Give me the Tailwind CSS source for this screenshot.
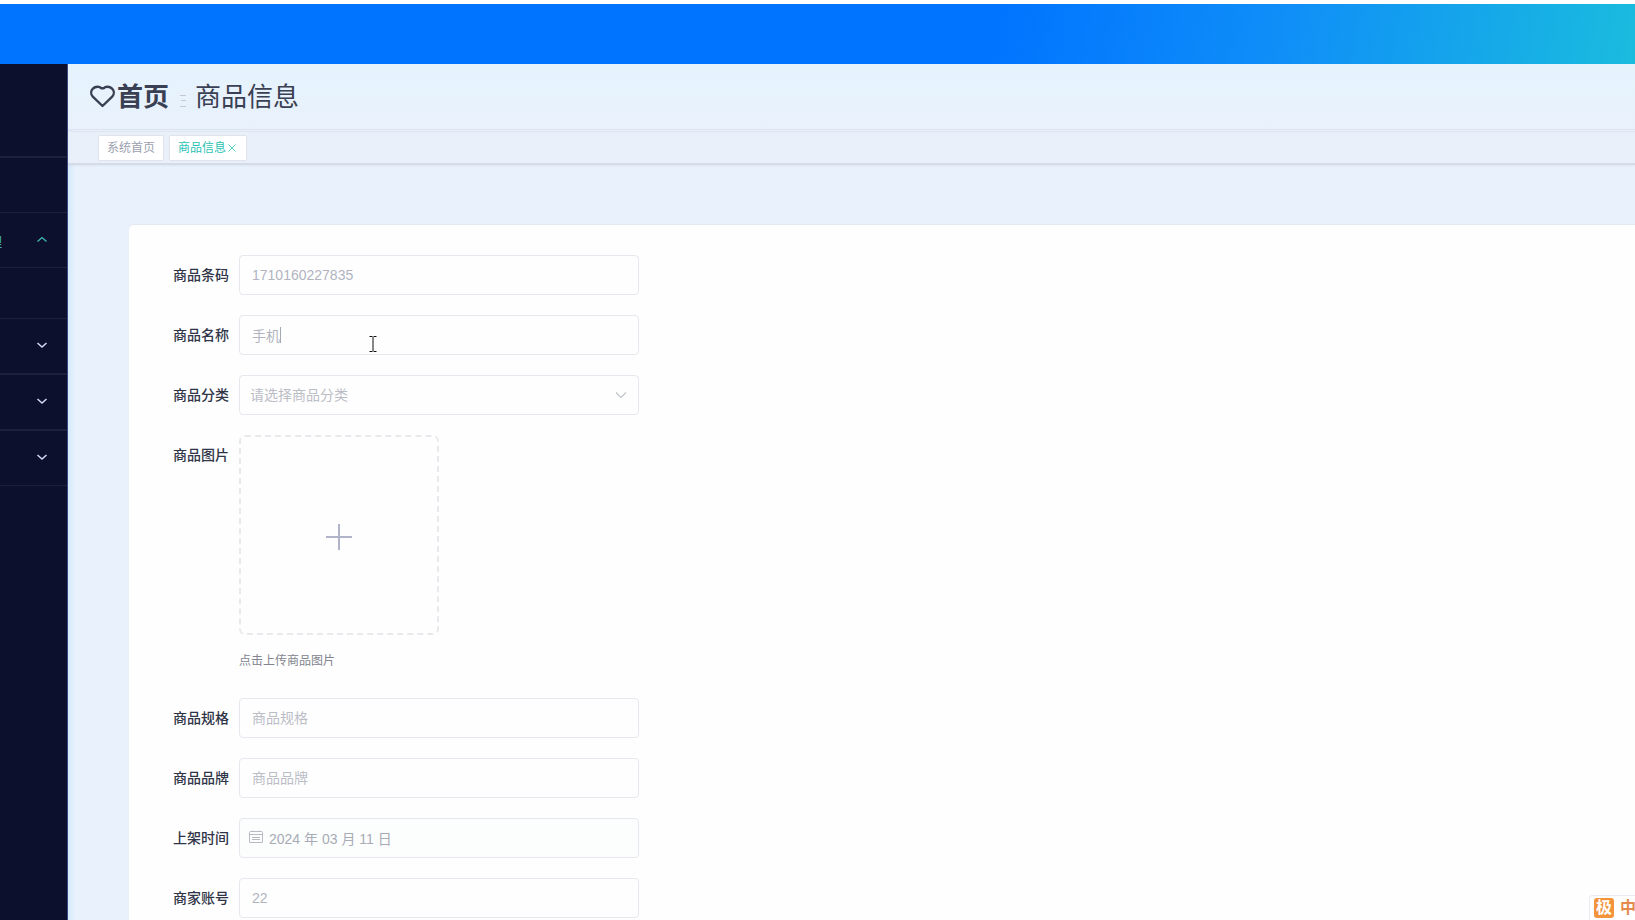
<!DOCTYPE html>
<html lang="zh-CN">
<head>
<meta charset="utf-8">
<meta name="viewport" content="width=device-width, initial-scale=1">
<title>商品信息</title>
<script src="https://cdn.jsdelivr.net/npm/@tailwindcss/browser@4"></script>
</head>
<body class="flex h-screen flex-col overflow-hidden bg-white pt-1 font-['Liberation_Sans','Noto_Sans_CJK_SC',sans-serif] text-sm text-[#303548]">
  <header class="h-[60px] shrink-0 bg-linear-[100deg,#0073ff_0%,#0073ff_60%,#0f8ef8_78%,#1abcde_100%]"></header>

  <div class="flex min-h-0 flex-1">
    <!-- Side navigation, scrolled so that only the submenu arrows show -->
    <nav aria-label="菜单" class="w-[68px] shrink-0 overflow-hidden border-r border-[#3a4a80] bg-[#0c102c]">
      <ul>
        <li class="h-[94px] border-b-2 border-[#1d203c]"></li>
        <li class="h-[55px] border-b border-[#1d203c]"></li>
        <li class="h-[55px] border-b border-[#1d203c]">
          <button type="button" aria-label="管理" class="relative flex h-full w-full items-center justify-end pr-[19px] text-[#3fb9b5]">
            <span class="absolute right-[65px] pt-1 whitespace-nowrap">管理</span>
            <svg class="h-3 w-3" viewBox="0 0 12 12" fill="none" stroke="currentColor" stroke-width="1.300"><path d="M1.500 7.500 6 3.500l4.500 4"/></svg>
          </button>
        </li>
        <li class="h-[51px] border-b border-[#1d203c]"></li>
        <li class="h-14 border-b-2 border-[#1d203c]">
          <button type="button" aria-label="展开" class="flex h-full w-full items-center justify-end pr-[19px] pb-[2px] text-[#d5daf2]"><svg class="h-3 w-3" viewBox="0 0 12 12" fill="none" stroke="currentColor" stroke-width="1.500"><path d="M1.500 4 6 8l4.500-4"/></svg></button>
        </li>
        <li class="h-14 border-b-2 border-[#1d203c]">
          <button type="button" aria-label="展开" class="flex h-full w-full items-center justify-end pr-[19px] pb-[2px] text-[#d5daf2]"><svg class="h-3 w-3" viewBox="0 0 12 12" fill="none" stroke="currentColor" stroke-width="1.500"><path d="M1.500 4 6 8l4.500-4"/></svg></button>
        </li>
        <li class="h-[55px] border-b border-[#1d203c]">
          <button type="button" aria-label="展开" class="flex h-full w-full items-center justify-end pr-[19px] pb-[2px] text-[#d5daf2]"><svg class="h-3 w-3" viewBox="0 0 12 12" fill="none" stroke="currentColor" stroke-width="1.500"><path d="M1.500 4 6 8l4.500-4"/></svg></button>
        </li>
      </ul>
    </nav>

    <main class="min-w-0 flex-1 overflow-auto bg-[#e9f1fc] bg-linear-[90deg,#d5eafd_0px,#e9f1fc_8px] [scrollbar-width:none]">
      <div class="flex h-[66px] items-center border-b border-[#dce3ee] bg-linear-to-b from-[#e5f3fd] to-[#e9f1fc] pt-px pl-[21px] text-[26px] leading-none text-[#3a4053]">
        <a href="#" class="flex items-center font-bold">
          <svg class="h-7 w-7" viewBox="0 0 28 28" fill="none" stroke="currentColor" stroke-width="2.400" stroke-linejoin="round"><path d="M13.500 23 3.800 13.600C1.600 11.300 1.700 7.800 3.900 5.600 6.400 3.200 10.500 3.200 12.500 5.300h2C16.500 3.200 20.600 3.200 23.100 5.600c2.200 2.200 2.300 5.700.1 8Z"/></svg>
          首页
        </a>
        <svg class="mt-2 mr-2 ml-[10px] h-3 w-2" viewBox="0 0 8 12" stroke="#c4c9d5" stroke-width="1"><path d="M1 .5h6M2 5.500h5M1 11.500h6"/></svg>
        <span>商品信息</span>
      </div>

      <div class="mt-px flex h-[34px] items-center gap-[5px] border-t border-b-2 border-t-[#dfe5ef] border-b-[#d5dce8] bg-[#e9f0fa] pl-[30px] text-xs shadow-xs">
        <a href="#" class="flex h-[26px] items-center rounded-xs border border-[#dfe3ec] bg-white px-2 pt-px text-[#9b9fb0]">系统首页</a>
        <div class="flex h-[26px] items-center rounded-xs border border-[#dfe3ec] bg-white px-2 pt-px text-[#2cc3b5]">
          <a href="#">商品信息</a>
          <button type="button" aria-label="关闭" class="flex h-3 w-3 items-center justify-center"><svg class="h-2 w-2" viewBox="0 0 8 8" stroke="currentColor" stroke-width="0.800"><path d="m.5.500 7 7m0-7-7 7"/></svg></button>
        </div>
      </div>

      <form class="mt-[59px] mr-0 ml-[61px] flex flex-col gap-5 rounded-tl-[5px] border-t border-[#e3e7ee] bg-[#fefefe] py-[30px] pl-[34px]">
        <div class="flex">
          <label for="code" class="w-[76px] shrink-0 pr-[10px] text-right leading-10 font-medium">商品条码</label>
          <input id="code" type="text" value="1710160227835" class="h-10 w-full max-w-[400px] rounded border border-[#e6e8ee] px-3 text-[#b1b4bf] outline-none">
        </div>
        <div class="flex">
          <label for="name" class="w-[76px] shrink-0 pr-[10px] text-right leading-10 font-medium">商品名称</label>
          <div class="relative w-full max-w-[400px]">
            <input id="name" type="text" value="手机" class="h-10 w-full rounded border border-[#e6e8ee] px-3 text-[#b1b4bf] outline-none">
            <span class="absolute top-3 left-[41px] h-4 w-px bg-[#a5a8b5]"></span>
            <svg class="absolute top-[21px] left-[130px] h-4 w-2" viewBox="0 0 8 16" fill="none" stroke="#111"><path d="M.5.500h3m1 0h3M4 1v14M.5 15.500h3m1 0h3"/></svg>
          </div>
        </div>
        <div class="flex">
          <label for="category" class="w-[76px] shrink-0 pr-[10px] text-right leading-10 font-medium">商品分类</label>
          <div class="relative w-full max-w-[400px]">
            <select id="category" class="h-10 w-full appearance-none rounded border border-[#e6e8ee] px-[10px] text-[#bbbdc6] outline-none"><option>请选择商品分类</option></select>
            <svg class="pointer-events-none absolute top-[14px] right-3 h-3 w-3" viewBox="0 0 12 12" fill="none" stroke="#c0c4cc" stroke-width="1.200"><path d="m1 3.500 5 5 5-5"/></svg>
          </div>
        </div>
        <div class="flex">
          <label for="picture" class="w-[76px] shrink-0 pr-[10px] text-right leading-10 font-medium">商品图片</label>
          <div>
            <button id="picture" type="button" aria-label="上传商品图片" class="flex h-[200px] w-[200px] items-center justify-center rounded-md border-2 border-dashed border-[#e8e9ed] pt-1">
              <svg class="h-[26px] w-[26px]" viewBox="0 0 26 26" stroke="#b0b4cb" stroke-width="2"><path d="M13 0v26M0 13h26"/></svg>
            </button>
            <p class="mt-[17px] mb-2 text-xs leading-[18px] text-[#82858f]">点击上传商品图片</p>
          </div>
        </div>
        <div class="flex">
          <label for="spec" class="w-[76px] shrink-0 pr-[10px] text-right leading-10 font-medium">商品规格</label>
          <input id="spec" type="text" placeholder="商品规格" class="h-10 w-full max-w-[400px] rounded border border-[#e6e8ee] px-3 outline-none placeholder:text-[#bbbdc6]">
        </div>
        <div class="flex">
          <label for="brand" class="w-[76px] shrink-0 pr-[10px] text-right leading-10 font-medium">商品品牌</label>
          <input id="brand" type="text" placeholder="商品品牌" class="h-10 w-full max-w-[400px] rounded border border-[#e6e8ee] px-3 outline-none placeholder:text-[#bbbdc6]">
        </div>
        <div class="flex">
          <label for="date" class="w-[76px] shrink-0 pr-[10px] text-right leading-10 font-medium">上架时间</label>
          <div class="relative w-full max-w-[400px]">
            <input id="date" type="text" value="2024 年 03 月 11 日" class="h-10 w-full rounded border border-[#e6e8ee] bg-[#fcfefe] px-[29px] text-[#a8abb5] outline-none">
            <svg class="pointer-events-none absolute top-3 left-[10px] h-[14px] w-[14px]" viewBox="0 0 14 14" fill="none" stroke="#b8bbc4"><path d="M1.500 1.500h11a1 1 0 0 1 1 1v10h-13v-10a1 1 0 0 1 1-1ZM.5 4.500h13M3.500.500v1m7-1v1M3 7.500h8M3 9.500h8"/></svg>
          </div>
        </div>
        <div class="flex">
          <label for="merchant" class="w-[76px] shrink-0 pr-[10px] text-right leading-10 font-medium">商家账号</label>
          <input id="merchant" type="text" value="22" class="h-10 w-full max-w-[400px] rounded border border-[#e6e8ee] px-3 text-[#b1b4bf] outline-none">
        </div>
      </form>
    </main>
  </div>

  <!-- Input method bar -->
  <div class="fixed right-0 bottom-0 flex h-[25px] w-[46px] items-center gap-[6px] overflow-hidden rounded-tl border-t border-l border-[#e8ebf1] bg-white pb-px pl-1">
    <span class="flex h-5 w-5 shrink-0 items-center justify-center rounded-[3px] bg-[#f3933b] text-base leading-none font-bold text-white">极</span>
    <span class="shrink-0 text-base leading-none font-bold text-[#e58a4e]">中</span>
  </div>
</body>
</html>
